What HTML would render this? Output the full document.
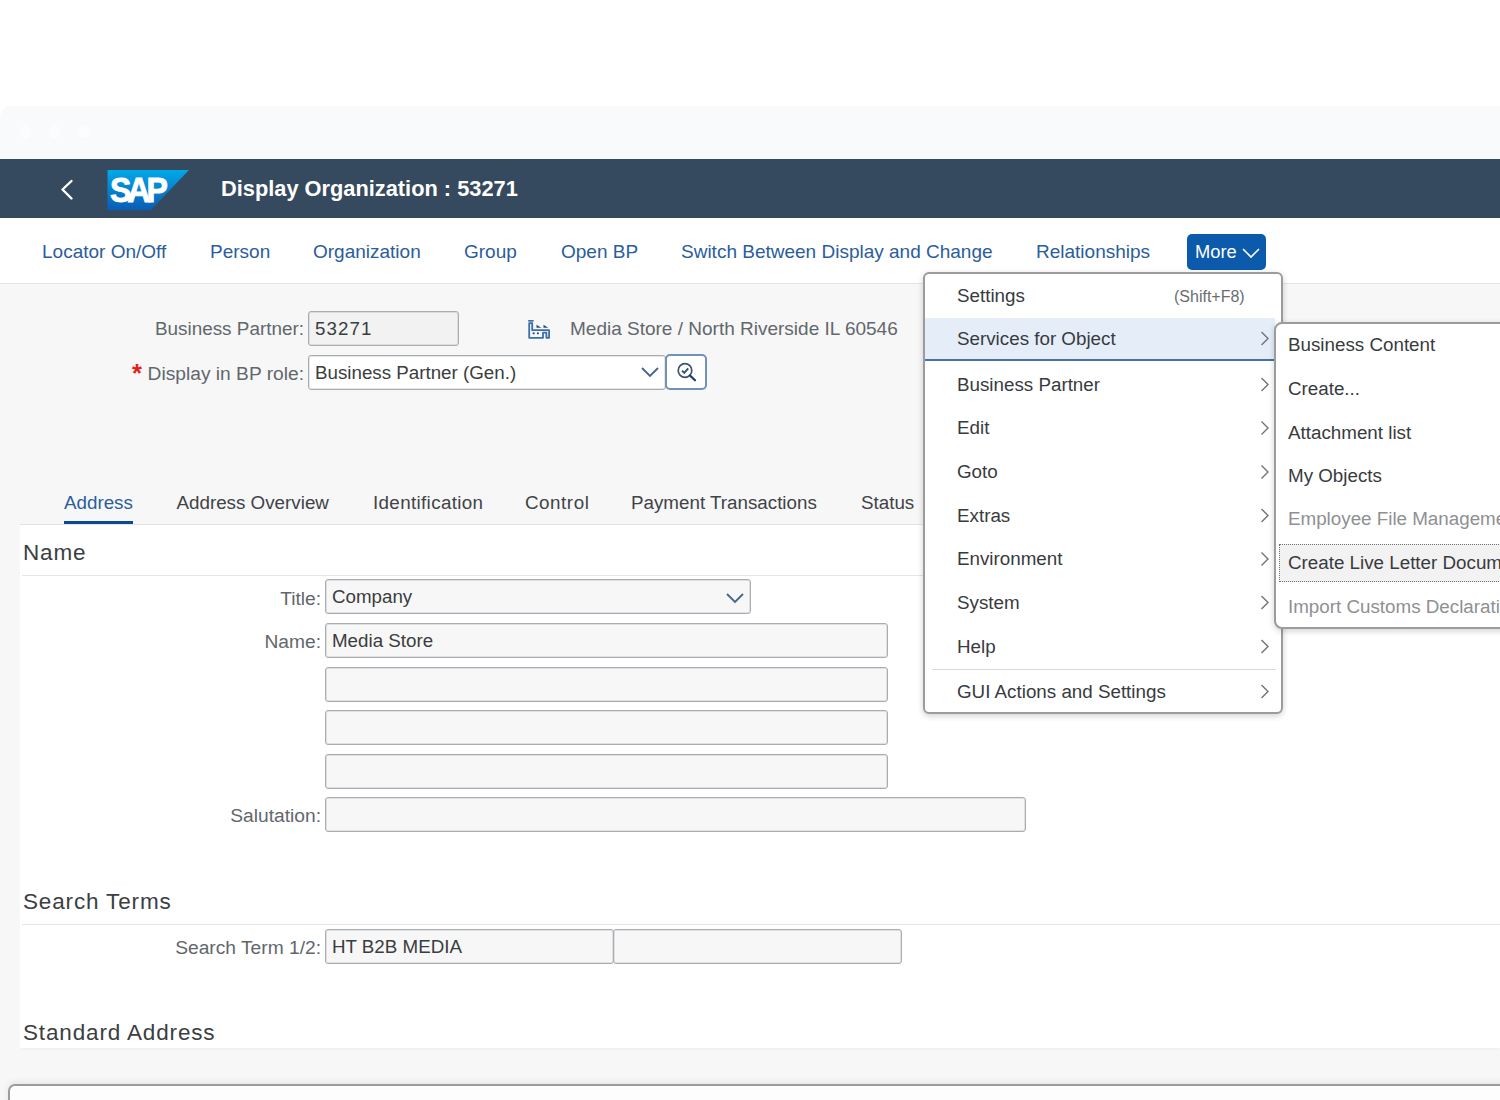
<!DOCTYPE html>
<html><head><meta charset="utf-8">
<style>
*{box-sizing:border-box;margin:0;padding:0}
html,body{width:1500px;height:1100px;overflow:hidden;background:#fff;font-family:"Liberation Sans",sans-serif;color:#32363a}
div,span{position:absolute;white-space:nowrap;line-height:1}
#chrome{left:0;top:106px;width:1500px;height:53px;background:#f9fafb;border-top-left-radius:12px}
.dot{top:125.5px;width:12px;height:12px;border-radius:50%;background:#fdfdfe}
#shell{left:0;top:159px;width:1500px;height:59px;background:#354a5f}
#toolbar{left:0;top:218px;width:1500px;height:66px;background:#fff;border-bottom:1px solid #e4e4e4}
#body{left:0;top:284px;width:1500px;height:816px;background:#f7f7f7}
.tb{top:242px;font-size:19px;color:#2a5d9c}
.lbl{font-size:19.2px;color:#62676c;text-align:right}
.inp{height:35px;border:1px solid #a9adb1;box-shadow:inset 0 0 0 1px rgba(169,173,177,0.3);border-radius:3px;background:#f7f7f7;font-size:18.75px;color:#3a3d40;line-height:33px;padding-left:6px}
.inp.w{background:#fff}
.tab{top:493.5px;font-size:18.8px;color:#404347}
.sec{font-size:22.5px;letter-spacing:0.85px;color:#3b3e42;left:23px}
.hr{height:1px;background:#e5e5e5}
#panel{left:20px;top:525px;width:1480px;height:523px;background:#fff;box-shadow:0 3px 3px -2px rgba(0,0,0,0.05)}
#menu{left:923px;top:272px;width:360px;height:442px;background:#fff;border:2px solid #9c9c9c;border-radius:6px;box-shadow:0 2px 6px rgba(0,0,0,0.18)}
#sub{left:1274px;top:322px;width:260px;height:307px;background:#fff;border:2px solid #9c9c9c;border-radius:8px;box-shadow:0 2px 6px rgba(0,0,0,0.18)}
.mi{font-size:18.8px;color:#383b3e;left:957px}
.si{font-size:18.8px;color:#383b3e;left:1288px}
.si.dis{color:#8e9093}
.chev{left:1260px;width:9px;height:14px}
</style></head><body>
<div id="chrome"></div>
<div class="dot" style="left:18.7px"></div><div class="dot" style="left:49px"></div><div class="dot" style="left:78px"></div>
<div id="shell"></div>
<!-- back arrow -->
<svg style="position:absolute;left:58px;top:177px" width="18" height="26" viewBox="0 0 18 26"><path d="M13.5 4 L4.5 12.5 L13.5 21.5" fill="none" stroke="#fff" stroke-width="2.4" stroke-linecap="round" stroke-linejoin="round"/></svg>
<!-- SAP logo -->
<svg style="position:absolute;left:107px;top:169px" width="83" height="42" viewBox="0 0 83 42">
<defs><linearGradient id="lg" x1="0" y1="0" x2="0" y2="1"><stop offset="0" stop-color="#00a9e8"/><stop offset="1" stop-color="#0b5bb4"/></linearGradient></defs>
<path d="M0.5 1 H82 L43.5 41.3 H0.5 Z" fill="url(#lg)"/>
<text x="1.5" y="33.3" font-family="Liberation Sans" font-weight="700" font-size="34.5" fill="#fff" stroke="#fff" stroke-width="0.9" letter-spacing="-4.2" transform="translate(1.5,0) scale(0.93,1)">SAP</text>
</svg>
<div style="left:221px;top:178.2px;font-size:21.8px;font-weight:700;color:#fff">Display Organization : 53271</div>

<div id="toolbar"></div>
<div class="tb" style="left:42px">Locator On/Off</div>
<div class="tb" style="left:210px">Person</div>
<div class="tb" style="left:313px">Organization</div>
<div class="tb" style="left:464px">Group</div>
<div class="tb" style="left:561px">Open BP</div>
<div class="tb" style="left:681px">Switch Between Display and Change</div>
<div class="tb" style="left:1036px">Relationships</div>
<div style="left:1187px;top:234px;width:79px;height:36px;background:#0b5aab;border-radius:5px"></div>
<div style="left:1195px;top:242.5px;font-size:18.3px;color:#fff">More</div>
<svg style="position:absolute;left:1241px;top:246px" width="20" height="14" viewBox="0 0 20 14"><path d="M2 3 L10 11 L18 3" fill="none" stroke="#fff" stroke-width="1.6"/></svg>

<div id="body"></div>
<div class="lbl" style="left:100.0px;width:204.0px;top:320.3px;font-size:18.9px">Business Partner:</div>
<div class="inp" style="left:308px;top:311px;width:151px;background:#f2f2f2;letter-spacing:1.1px">53271</div>
<svg style="position:absolute;left:527px;top:319px" width="24" height="21" viewBox="0 0 24 21">
<rect x="1.2" y="1" width="5.4" height="1.7" fill="#3d6fa6"/>
<path d="M2.2 4.1 H5.2 V11.2 H22.1 V18.8 H19.4 V13.7 H16 V18.8 H2.2 Z" fill="none" stroke="#3d6fa6" stroke-width="1.8" stroke-linejoin="round"/>
<path d="M9.5 5.7 L14.3 8.8 H9.5 Z M16.5 5.7 L21.3 8.8 H16.5 Z" fill="#23507f"/>
<circle cx="6.6" cy="14.3" r="1.1" fill="#23507f"/><circle cx="10.9" cy="14.3" r="1.1" fill="#23507f"/>
</svg>
<div style="left:570px;top:319.4px;font-size:19px;color:#62676c">Media Store / North Riverside IL 60546</div>

<div style="left:132px;top:360.5px;font-size:25.5px;color:#e0231e;font-weight:700">*</div>
<div class="lbl" style="left:100.0px;width:204.0px;top:363.8px">Display in BP role:</div>
<div class="inp w" style="left:308px;top:355px;width:358px">Business Partner (Gen.)</div>
<svg style="position:absolute;left:640px;top:365px" width="20" height="14" viewBox="0 0 20 14"><path d="M2 3 L10 11 L18 3" fill="none" stroke="#4a6788" stroke-width="1.9"/></svg>
<div style="left:665px;top:354px;width:42px;height:36px;border:2px solid #7191b6;border-radius:5px;background:#fff"></div>
<svg style="position:absolute;left:672px;top:358px" width="28" height="28" viewBox="0 0 28 28">
<circle cx="13" cy="12.5" r="6.8" fill="none" stroke="#3b5270" stroke-width="1.7"/>
<path d="M18 17.5 L23 22.3" stroke="#143d72" stroke-width="2.2" stroke-linecap="round"/>
<path d="M10 12.6 L12.3 14.9 L16.2 10.3" fill="none" stroke="#3b5270" stroke-width="2"/>
</svg>

<!-- tabs -->
<div class="tab" style="left:64px;color:#2a5f9f">Address</div>
<div style="left:64px;top:521px;width:69px;height:3px;background:#0b4a93"></div>
<div class="tab" style="left:176.5px">Address Overview</div>
<div class="tab" style="left:373px;letter-spacing:0.35px">Identification</div>
<div class="tab" style="left:525px;letter-spacing:0.55px">Control</div>
<div class="tab" style="left:631px">Payment Transactions</div>
<div class="tab" style="left:861px">Status</div>
<div class="hr" style="left:20px;top:524px;width:1480px;background:#e2e2e2"></div>

<div id="panel"></div>
<div class="sec" style="top:541.8px">Name</div>
<div class="hr" style="left:22px;top:575px;width:1478px"></div>
<div class="lbl" style="left:100.0px;width:221.0px;top:588.8px">Title:</div>
<div class="inp" style="left:325px;top:579.3px;width:426px">Company</div>
<svg style="position:absolute;left:725px;top:591px" width="20" height="14" viewBox="0 0 20 14"><path d="M2 3 L10 11 L18 3" fill="none" stroke="#4a6788" stroke-width="1.9"/></svg>
<div class="lbl" style="left:100.0px;width:221.0px;top:632.3px">Name:</div>
<div class="inp" style="left:325px;top:623px;width:563px">Media Store</div>
<div class="inp" style="left:325px;top:666.7px;width:563px"></div>
<div class="inp" style="left:325px;top:710.3px;width:563px"></div>
<div class="inp" style="left:325px;top:754px;width:563px"></div>
<div class="lbl" style="left:100.0px;width:221.0px;top:806px">Salutation:</div>
<div class="inp" style="left:325px;top:797px;width:701px"></div>

<div class="sec" style="top:891px">Search Terms</div>
<div class="hr" style="left:22px;top:924px;width:1478px"></div>
<div class="lbl" style="left:100.0px;width:221.0px;top:937.5px">Search Term 1/2:</div>
<div class="inp" style="left:325px;top:929px;width:289px">HT B2B MEDIA</div>
<div class="inp" style="left:613px;top:929px;width:289px"></div>

<div class="sec" style="top:1022.2px">Standard Address</div>
<div style="left:8px;top:1084px;width:1520px;height:60px;border:2px solid #9c9c9c;border-radius:7px;background:#fdfdfd;box-shadow:0 -2px 6px rgba(0,0,0,0.07)"></div>

<!-- menu -->
<div id="menu"></div>
<div style="left:924.5px;top:318px;width:350px;height:41px;background:#e5eef8"></div>
<div style="left:924.5px;top:359px;width:350px;height:2px;background:#4672a8"></div>
<div class="mi" style="top:286.5px">Settings</div>
<div style="left:1174px;top:288.5px;font-size:16px;color:#6a6d70">(Shift+F8)</div>
<div class="mi" style="top:330.0px">Services for Object</div>
<div class="mi" style="top:375.6px">Business Partner</div>
<div class="mi" style="top:419.4px">Edit</div>
<div class="mi" style="top:463.0px">Goto</div>
<div class="mi" style="top:506.7px">Extras</div>
<div class="mi" style="top:550.3px">Environment</div>
<div class="mi" style="top:594.0px">System</div>
<div class="mi" style="top:637.6px">Help</div>
<div class="hr" style="left:932px;top:669px;width:344px;background:#d9d9d9"></div>
<div class="mi" style="top:683.3px">GUI Actions and Settings</div>
<svg class="chevs" style="position:absolute;left:1258px;top:320px" width="14" height="390" viewBox="0 0 14 390">
<g fill="none" stroke="#6f7478" stroke-width="1.4">
<path d="M3.5 12 L10 18.5 L3.5 25"/>
<path d="M3.5 58 L10 64.5 L3.5 71"/>
<path d="M3.5 101.5 L10 108 L3.5 114.5"/>
<path d="M3.5 145.5 L10 152 L3.5 158.5"/>
<path d="M3.5 189 L10 195.5 L3.5 202"/>
<path d="M3.5 232.5 L10 239 L3.5 245.5"/>
<path d="M3.5 276 L10 282.5 L3.5 289"/>
<path d="M3.5 320 L10 326.5 L3.5 333"/>
<path d="M3.5 365 L10 371.5 L3.5 378"/>
</g></svg>

<!-- submenu -->
<div id="sub"></div>
<div style="left:1279px;top:544px;width:240px;height:38px;background:#f2f2f2;border:1px dotted #6f6f6f"></div>
<div class="si" style="top:336.0px">Business Content</div>
<div class="si" style="top:380.0px">Create...</div>
<div class="si" style="top:423.5px">Attachment list</div>
<div class="si" style="top:467.0px">My Objects</div>
<div class="si dis" style="top:510.4px">Employee File Management</div>
<div class="si" style="top:554.0px">Create Live Letter Document</div>
<div class="si dis" style="top:598.0px">Import Customs Declaration</div>
</body></html>
